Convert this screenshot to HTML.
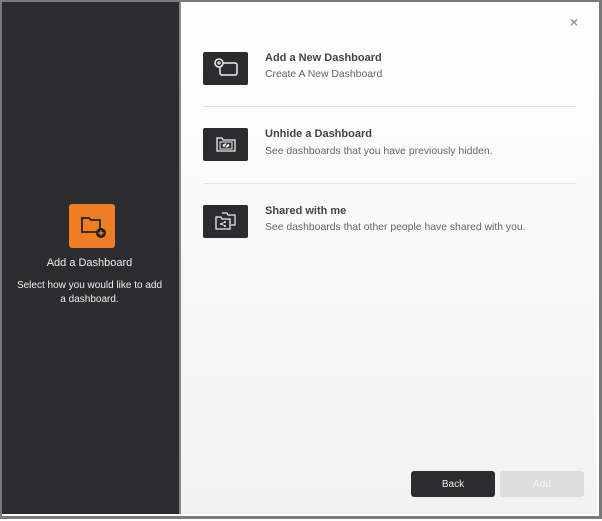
<!DOCTYPE html><html><head><style>
body{margin:0;width:602px;height:521px;background:#fff;font-family:"Liberation Sans",sans-serif;overflow:hidden}
.f{position:absolute;left:0;top:0;width:597px;height:514px;border:2px solid #7a7a7a;border-right-width:3px;border-bottom-width:3px;}
.l{position:absolute;left:0;top:0;width:179px;height:514px;background:#2a2c2d;border-right:2px solid #888}
.r{position:absolute;left:181px;top:0;width:416px;height:514px;background:linear-gradient(#fff,#f2f2f2)}
.oi{position:absolute;left:69px;top:204px;width:46px;height:44px;background:#ef7d22;border-radius:3px}
.lt{position:absolute;left:0;width:179px;text-align:center;color:#eee;font-size:11px}
.ic{position:absolute;left:22px;width:45px;height:33px;background:#2a2c2d;border-radius:2px}
.t{position:absolute;left:84px;font-size:11px;font-weight:bold;color:#444}
.s{position:absolute;left:84px;font-size:10.4px;color:#666}
.hr{position:absolute;left:22px;width:373px;height:1px;background:#e6e6e6}
.b{position:absolute;top:471px;width:84px;height:26px;border-radius:3px;font-size:10px;text-align:center;line-height:27px}
</style></head><body>
<div class="f"></div>
<div class="l">
<div class="oi"><svg width="46" height="44" viewBox="0 0 46 44"><path d="M13 14h7l2 2h9v12H13z" fill="none" stroke="#222" stroke-width="1.8"/><circle cx="32" cy="29" r="5" fill="#222"/><path d="M32 26.5v5M29.5 29h5" stroke="#ef7d22" stroke-width="1.5"/></svg></div>
<div class="lt" style="top:257px">Add a Dashboard</div>
<div class="lt" style="top:279px;font-size:10px;line-height:14px">Select how you would like to add<br>a dashboard.</div>
</div>
<div class="r">
<div style="position:absolute;left:389px;top:14px;color:#999;font-size:14px;font-weight:bold">×</div>
<div class="ic" style="top:52px"><svg width="45" height="33"><rect x="17" y="11" width="17" height="12" rx="2" fill="none" stroke="#eee" stroke-width="1.5"/><circle cx="16" cy="11" r="4" fill="#2a2c2d" stroke="#eee" stroke-width="1.5"/><path d="M16 9v4M14 11h4" stroke="#eee" stroke-width="1.2"/></svg></div>
<div class="t" style="top:52px">Add a New Dashboard</div>
<div class="s" style="top:69px">Create A New Dashboard</div>
<div class="hr" style="top:106px"></div>
<div class="ic" style="top:128px"><svg width="45" height="33"><path d="M14 10h5l1 2h12v11H14z" fill="none" stroke="#eee" stroke-width="1.3"/><rect x="17" y="14" width="12" height="7" fill="none" stroke="#eee"/><ellipse cx="23" cy="17.5" rx="3.5" ry="2" fill="#eee"/><path d="M21 20l4-5" stroke="#2a2c2d"/></svg></div>
<div class="t" style="top:128px">Unhide a Dashboard</div>
<div class="s" style="top:146px">See dashboards that you have previously hidden.</div>
<div class="hr" style="top:183px"></div>
<div class="ic" style="top:205px"><svg width="45" height="33"><path d="M19 8h5l1 2h7v10h-4" fill="none" stroke="#eee" stroke-width="1.2"/><path d="M13 12h5l1 2h8v10H13z" fill="none" stroke="#eee" stroke-width="1.3"/><circle cx="18" cy="19" r="1" fill="#eee"/><circle cx="22" cy="17" r="1" fill="#eee"/><circle cx="22" cy="21" r="1" fill="#eee"/><path d="M18 19l4-2M18 19l4 2" stroke="#eee" stroke-width=".7"/></svg></div>
<div class="t" style="top:205px">Shared with me</div>
<div class="s" style="top:222px">See dashboards that other people have shared with you.</div>
<div class="b" style="left:230px;background:#2a2c2d;color:#eee">Back</div>
<div class="b" style="left:319px;background:#ddd;color:#f5f5f5">Add</div>
</div>
<div class="f"></div>
</body></html>
